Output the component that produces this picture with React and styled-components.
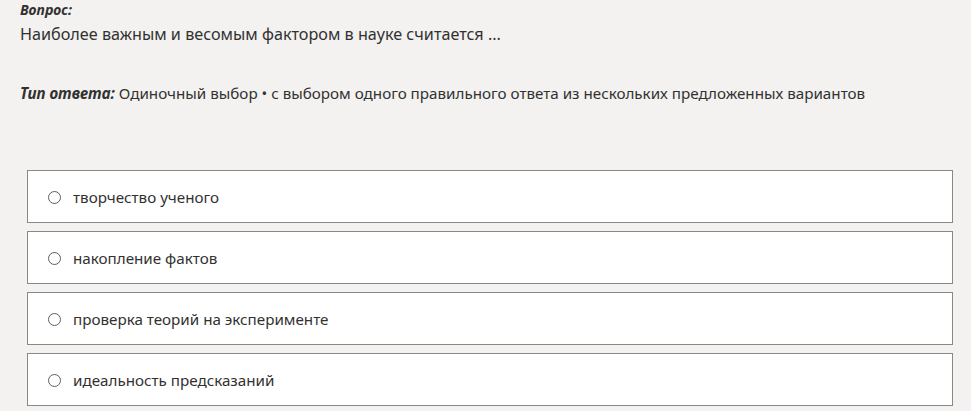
import React from 'react';
import styled, { createGlobalStyle } from 'styled-components';

const GlobalStyle = createGlobalStyle`
  html, body {
    margin: 0;
    padding: 0;
    background: #f3f2f1;
  }
  body {
    font-family: "Noto Sans", "Open Sans", sans-serif;
    color: #323130;
  }
`;

const Page = styled.div`
  padding: 0 18px 0 20px;
`;

const Label = styled.div`
  font-weight: 700;
  font-style: italic;
  font-size: 14px;
  line-height: 18px;
  padding-top: 1px;
`;

const Question = styled.div`
  font-size: 16.2px;
  line-height: 26px;
  margin-top: 2px;
`;

const AnswerType = styled.div`
  font-size: 15.2px;
  line-height: 20px;
  margin-top: 36px;
`;

const TypeLabel = styled.span`
  font-weight: 700;
  font-style: italic;
`;

const Options = styled.div`
  display: flex;
  flex-direction: column;
  gap: 8px;
  margin: 67px 0 0 7px;
`;

const Option = styled.label`
  display: flex;
  align-items: center;
  height: 51px;
  background: #ffffff;
  border: 1px solid #8a8886;
  padding-left: 20px;
  cursor: pointer;
`;

const Radio = styled.span`
  width: 13px;
  height: 13px;
  border: 1px solid #605e5c;
  border-radius: 50%;
  box-sizing: border-box;
  flex-shrink: 0;
  margin-top: 2px;
`;

const OptionText = styled.span`
  font-size: 15.2px;
  margin-left: 12px;
`;

const options = [
  'творчество ученого',
  'накопление фактов',
  'проверка теорий на эксперименте',
  'идеальность предсказаний'
];

export default function App() {
  return (
    <Page>
      <GlobalStyle />
      <Label>Вопрос:</Label>
      <Question>Наиболее важным и весомым фактором в науке считается ...</Question>
      <AnswerType>
        <TypeLabel>Тип ответа:</TypeLabel> Одиночный выбор • с выбором одного правильного ответа из нескольких предложенных вариантов
      </AnswerType>
      <Options>
        {options.map(text => (
          <Option key={text}>
            <Radio />
            <OptionText>{text}</OptionText>
          </Option>
        ))}
      </Options>
    </Page>
  );
}
